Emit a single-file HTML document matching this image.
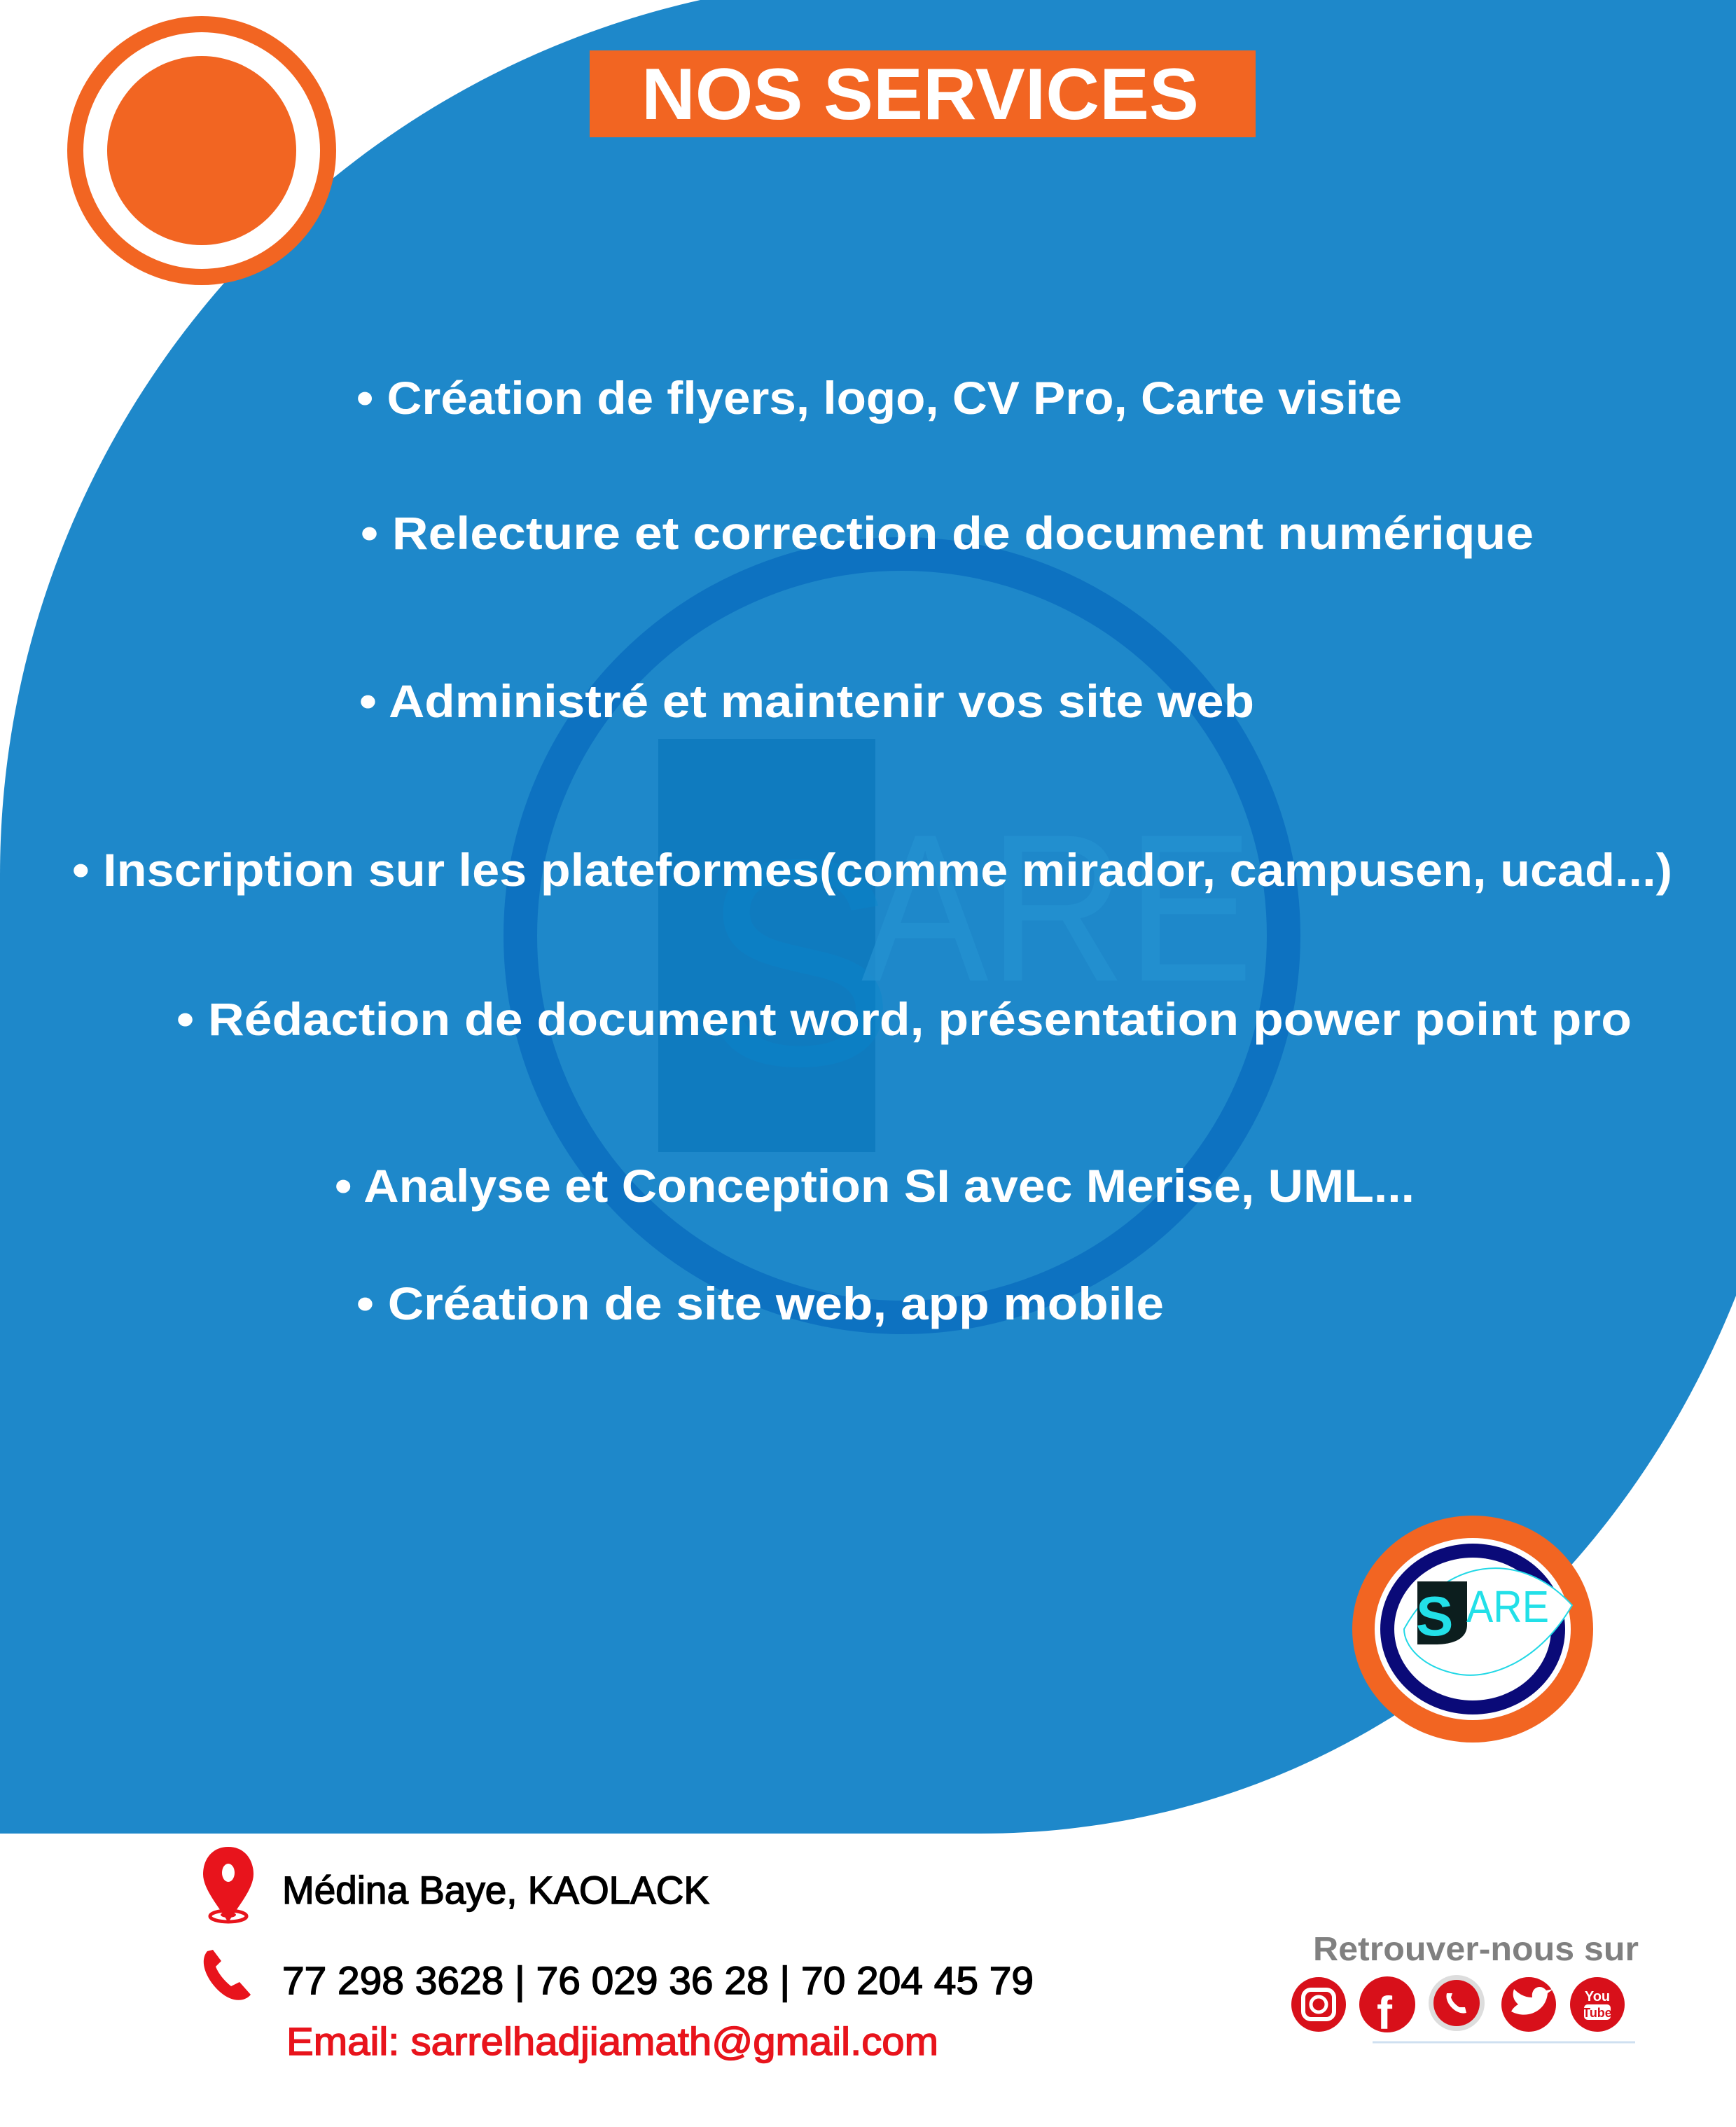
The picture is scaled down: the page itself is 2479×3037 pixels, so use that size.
<!DOCTYPE html>
<html><head><meta charset="utf-8"><style>
html,body{margin:0;padding:0;background:#fff;}
svg{display:block;}
</style></head><body>
<svg width="2479" height="3037" viewBox="0 0 2479 3037" xmlns="http://www.w3.org/2000/svg">
<rect width="2479" height="3037" fill="#fff"/>
<path d="M0 2618 L0 1250 C 0 650 420 130 1000 0 L2479 0 L2479 1850 C 2300 2300 1900 2618 1400 2618 Z" fill="#1e88ca"/>
<!-- watermark -->
<circle cx="1288" cy="1336" r="545" fill="none" stroke="#0a6fbf" stroke-width="48" opacity="0.85"/>
<rect x="940" y="1055" width="310" height="590" fill="#0b78bb" opacity="0.8"/>
<text x="1000" y="1520" font-family="Liberation Sans, sans-serif" font-size="420" fill="#0a86cc" opacity="0.4">S</text>
<text x="1230" y="1400" font-family="Liberation Sans, sans-serif" font-size="300" fill="#2592d2" opacity="0.7" textLength="560" lengthAdjust="spacingAndGlyphs">ARE</text>
<!-- top-left circle -->
<circle cx="288" cy="215" r="192" fill="#f26522"/>
<circle cx="288" cy="215" r="169" fill="#fff"/>
<circle cx="288" cy="215" r="135" fill="#f26522"/>
<!-- header -->
<rect x="842" y="72" width="951" height="124" fill="#f26522"/>
<text x="916" y="170" font-family="Liberation Sans, sans-serif" font-weight="bold" font-size="104" fill="#fff" textLength="796" lengthAdjust="spacingAndGlyphs">NOS SERVICES</text>
<g font-family="Liberation Sans, sans-serif" font-weight="bold" font-size="66" fill="#fff">
<text x="509" y="591" textLength="1493" lengthAdjust="spacingAndGlyphs">• Création de flyers, logo, CV Pro, Carte visite</text>
<text x="515" y="784" textLength="1675" lengthAdjust="spacingAndGlyphs">• Relecture et correction de document numérique</text>
<text x="513" y="1024" textLength="1278" lengthAdjust="spacingAndGlyphs">• Administré et maintenir vos site web</text>
<text x="103" y="1265" textLength="2285" lengthAdjust="spacingAndGlyphs">• Inscription sur les plateformes(comme mirador, campusen, ucad...)</text>
<text x="252" y="1478" textLength="2078" lengthAdjust="spacingAndGlyphs">• Rédaction de document word, présentation power point pro</text>
<text x="478" y="1716" textLength="1542" lengthAdjust="spacingAndGlyphs">• Analyse et Conception SI avec Merise, UML...</text>
<text x="509" y="1884" textLength="1153" lengthAdjust="spacingAndGlyphs">• Création de site web, app mobile</text>
</g>
<!-- bottom logo -->
<ellipse cx="2103" cy="2326" rx="172" ry="162" fill="#f26522"/>
<ellipse cx="2103" cy="2326" rx="140" ry="130" fill="#fff"/>
<ellipse cx="2103" cy="2326" rx="132" ry="122" fill="#0a0a78"/>
<ellipse cx="2103" cy="2326" rx="112" ry="102" fill="#fff"/>
<path d="M2005 2326 C 2060 2225 2170 2210 2245 2292 C 2200 2370 2130 2400 2080 2390 C 2030 2380 2005 2350 2005 2326 Z" fill="#fff" stroke="#22d8e6" stroke-width="2"/>
<path d="M2024 2258 L2095 2258 L2095 2320 C 2095 2340 2075 2348 2050 2348 L2024 2348 Z" fill="#0c1e1e"/>
<text x="2022" y="2335" font-family="Liberation Sans, sans-serif" font-weight="bold" font-size="80" fill="#22e0e8">S</text>
<text x="2094" y="2316" font-family="Liberation Sans, sans-serif" font-size="64" fill="#22e0e8" textLength="118" lengthAdjust="spacingAndGlyphs">ARE</text>
<!-- footer icons -->
<path d="M326 2637 C 302 2637 290 2656 290 2676 C 290 2698 314 2724 326 2745 C 338 2724 362 2698 362 2676 C 362 2656 350 2637 326 2637 Z" fill="#e8141c"/>
<ellipse cx="326" cy="2674" rx="9" ry="13" fill="#fff"/>
<ellipse cx="326" cy="2736" rx="26" ry="8" fill="none" stroke="#e8141c" stroke-width="5"/>
<ellipse cx="326" cy="2734" rx="11" ry="4" fill="#e8141c"/>
<path d="M296 2786 C 284 2800 294 2826 314 2844 C 332 2860 350 2858 358 2848 L342 2830 L330 2836 C 320 2828 312 2818 308 2808 L316 2800 L304 2784 Z" fill="#e8141c"/>
<g font-family="Liberation Sans, sans-serif">
<text x="403" y="2718" font-size="56" fill="#000" stroke="#000" stroke-width="1.5" textLength="610" lengthAdjust="spacingAndGlyphs">Médina Baye, KAOLACK</text>
<text x="403" y="2847" font-size="56" fill="#000" stroke="#000" stroke-width="1.5" textLength="1073" lengthAdjust="spacingAndGlyphs">77 298 3628 | 76 029 36 28 | 70 204 45 79</text>
<text x="409" y="2934" font-size="56" fill="#e8141c" stroke="#e8141c" stroke-width="1.5" textLength="931" lengthAdjust="spacingAndGlyphs">Email: sarrelhadjiamath@gmail.com</text>
<text x="1875" y="2799" font-size="48" font-weight="bold" fill="#808080" textLength="465" lengthAdjust="spacingAndGlyphs">Retrouver-nous sur</text>
</g>
<g>
<circle cx="1883" cy="2862" r="39" fill="#d8101a"/>
<rect x="1861" y="2841" width="44" height="42" rx="11" fill="none" stroke="#fff" stroke-width="6"/>
<circle cx="1883" cy="2862" r="11" fill="none" stroke="#fff" stroke-width="5"/>
<circle cx="1981" cy="2862" r="40" fill="#d8101a"/>
<text x="1966" y="2897" font-family="Liberation Sans, sans-serif" font-weight="bold" font-size="66" fill="#fff">f</text>
<circle cx="2080" cy="2860" r="40" fill="#ddd"/>
<circle cx="2080" cy="2860" r="33" fill="#d8101a"/>
<path d="M2066 2846 C 2062 2860 2080 2878 2094 2874 L2092 2866 L2084 2866 C 2078 2862 2074 2858 2072 2852 L2074 2846 Z" fill="#fff"/>
<circle cx="2183" cy="2862" r="39" fill="#d8101a"/>
<path d="M2158 2872 C 2180 2884 2208 2872 2210 2846 L2218 2840 L2208 2842 C 2200 2832 2186 2838 2188 2852 C 2176 2852 2168 2846 2162 2840 C 2158 2852 2164 2858 2168 2862 C 2164 2864 2160 2868 2158 2872 Z" fill="#fff"/>
<circle cx="2281" cy="2862" r="39" fill="#d8101a"/>
<text x="2281" y="2857" text-anchor="middle" font-family="Liberation Sans, sans-serif" font-weight="bold" font-size="20" fill="#fff">You</text>
<rect x="2262" y="2862" width="38" height="22" rx="5" fill="#fff"/>
<text x="2281" y="2880" text-anchor="middle" font-family="Liberation Sans, sans-serif" font-weight="bold" font-size="18" fill="#d8101a">Tube</text>
</g>
<line x1="1960" y1="2916" x2="2335" y2="2916" stroke="#cfe0f0" stroke-width="3"/>
</svg>
</body></html>
